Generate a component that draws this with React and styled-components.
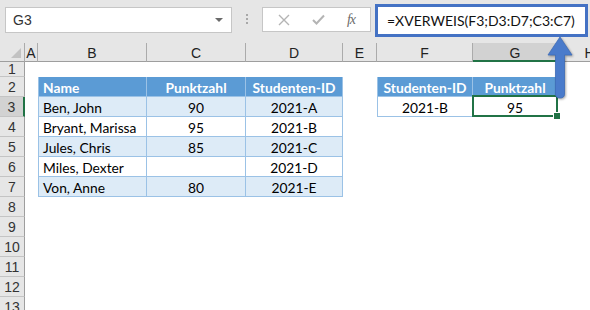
import React from 'react'
import styled, { createGlobalStyle } from 'styled-components'

const GlobalStyle = createGlobalStyle`
  body {
    margin: 0;
    background: #ffffff;
    overflow: hidden;
  }
`

const Window = styled.div`
  position: relative;
  width: 590px;
  height: 310px;
  overflow: hidden;
  font-family: 'Lato', 'Liberation Sans', sans-serif;
`

const FormulaBar = styled.div`
  height: 43px;
  background: #e6e6e6;
  display: flex;
  align-items: flex-start;
  box-sizing: border-box;
`

const NameBox = styled.div`
  margin: 7px 0 0 5px;
  width: 227px;
  height: 26px;
  box-sizing: border-box;
  background: #fff;
  border: 1px solid #c6c6c6;
  display: flex;
  align-items: center;
  justify-content: space-between;
  padding: 0 8px 0 7px;
  font-family: 'Liberation Sans', sans-serif;
  font-size: 14px;
  color: #333;
`

const Caret = styled.span`
  width: 0;
  height: 0;
  border-left: 4px solid transparent;
  border-right: 4px solid transparent;
  border-top: 4px solid #6a6a6a;
`

const Dots = styled.div`
  margin: 14px 0 0 0;
  width: 30px;
  display: flex;
  flex-direction: column;
  align-items: center;
  gap: 2px;
  & span {
    width: 2px;
    height: 2px;
    background: #a8a8a8;
  }
`

const Buttons = styled.div`
  margin-top: 7px;
  width: 109px;
  height: 25px;
  box-sizing: border-box;
  background: #fff;
  border: 1px solid #c6c6c6;
  display: flex;
  align-items: center;
  justify-content: space-around;
  padding: 0 4px;
`

const Fx = styled.span`
  font-family: 'Liberation Serif', serif;
  font-style: italic;
  font-size: 14px;
  color: #6b6b6b;
  letter-spacing: -1px;
`

const FormulaInput = styled.div`
  margin: 4px 0 0 4px;
  width: 213px;
  height: 33px;
  box-sizing: border-box;
  border: 3px solid #4472c4;
  background: #fff;
  display: flex;
  align-items: center;
  padding-left: 9px;
  font-family: 'Lato', sans-serif;
  font-size: 14px;
  white-space: nowrap;
  color: #111;
`

const Sheet = styled.div`
  display: grid;
  grid-template-columns: 25px 13px 109px 99px 97px 34px 96px 85px 64px;
  grid-template-rows: 19px 15px repeat(12, 20px);
`

const ColHead = styled.div`
  box-sizing: border-box;
  background: ${p => (p.$active ? '#d2d2d2' : '#e6e6e6')};
  border-right: 1px solid #ababab;
  border-bottom: ${p => (p.$active ? '2px solid #217346' : '1px solid #9e9e9e')};
  display: flex;
  align-items: center;
  justify-content: center;
  font-family: 'Liberation Sans', sans-serif;
  font-size: 14px;
  color: #222;
  padding-top: 2px;
`

const Corner = styled(ColHead)`
  position: relative;
  &::after {
    content: '';
    position: absolute;
    right: 3px;
    bottom: 3px;
    width: 0;
    height: 0;
    border-left: 10px solid transparent;
    border-bottom: 10px solid #c2c2c2;
  }
`

const RowHead = styled.div`
  box-sizing: border-box;
  background: ${p => (p.$active ? '#d2d2d2' : '#e6e6e6')};
  border-right: ${p => (p.$active ? '2px solid #217346' : '1px solid #9e9e9e')};
  border-bottom: 1px solid #c4c4c4;
  display: flex;
  align-items: center;
  justify-content: center;
  font-family: 'Liberation Sans', sans-serif;
  font-size: 14px;
  color: #333;
`

const Cell = styled.div`
  position: relative;
  box-sizing: border-box;
  display: flex;
  align-items: center;
  justify-content: ${p => (p.$align === 'left' ? 'flex-start' : 'center')};
  padding: 1px 4px 0;
  font-size: 13.8px;
  white-space: nowrap;
  color: ${p => (p.$kind === 'head' ? '#fff' : '#000')};
  font-weight: ${p => (p.$kind === 'head' ? 700 : 400)};
  background: ${p =>
    p.$kind === 'head' ? '#5b9bd5' : p.$kind === 'band' ? '#ddebf7' : '#fff'};
  border-right: ${p => (p.$kind ? '1px solid #9bc2e6' : 'none')};
  border-bottom: ${p => (p.$kind ? '1px solid #9bc2e6' : 'none')};
  border-left: ${p => (p.$first ? '1px solid #9bc2e6' : 'none')};

  ${p =>
    p.$selected &&
    `
    &::after {
      content: '';
      position: absolute;
      left: -1px;
      top: -2px;
      right: -1px;
      bottom: -1px;
      border: 2px solid #217346;
    }
    &::before {
      content: '';
      position: absolute;
      right: -4px;
      bottom: -4px;
      width: 6px;
      height: 6px;
      background: #217346;
      border: 1px solid #fff;
      z-index: 2;
    }
  `}
`

const Arrow = styled.svg`
  position: absolute;
  left: 545px;
  top: 36px;
  filter: drop-shadow(1px 1px 1px rgba(0, 0, 0, 0.35));
`

const COLS = ['A', 'B', 'C', 'D', 'E', 'F', 'G', 'H']

const students = [
  ['Ben, John', '90', '2021-A'],
  ['Bryant, Marissa', '95', '2021-B'],
  ['Jules, Chris', '85', '2021-C'],
  ['Miles, Dexter', '', '2021-D'],
  ['Von, Anne', '80', '2021-E'],
]

const buildCells = () => {
  const cells = {}
  cells.B2 = { text: 'Name', kind: 'head', align: 'left', first: true }
  cells.C2 = { text: 'Punktzahl', kind: 'head' }
  cells.D2 = { text: 'Studenten-ID', kind: 'head' }
  students.forEach((s, i) => {
    const r = i + 3
    const kind = i % 2 === 0 ? 'band' : 'plain'
    cells['B' + r] = { text: s[0], kind, align: 'left', first: true }
    cells['C' + r] = { text: s[1], kind }
    cells['D' + r] = { text: s[2], kind }
  })
  cells.F2 = { text: 'Studenten-ID', kind: 'head', first: true }
  cells.G2 = { text: 'Punktzahl', kind: 'head' }
  cells.F3 = { text: '2021-B', kind: 'plain', first: true }
  cells.G3 = { text: '95', kind: 'plain', selected: true }
  return cells
}

const App = () => {
  const cells = buildCells()
  const rows = []
  for (let r = 1; r <= 13; r++) {
    rows.push(
      <RowHead key={'r' + r} $active={r === 3}>
        {r}
      </RowHead>
    )
    COLS.forEach(c => {
      const cell = cells[c + r]
      rows.push(
        <Cell
          key={c + r}
          $kind={cell?.kind}
          $align={cell?.align}
          $first={cell?.first}
          $selected={cell?.selected}
        >
          {cell?.text}
        </Cell>
      )
    })
  }

  return (
    <Window>
      <GlobalStyle />
      <FormulaBar>
        <NameBox>
          G3
          <Caret />
        </NameBox>
        <Dots>
          <span />
          <span />
          <span />
        </Dots>
        <Buttons>
          <svg width="12" height="12" viewBox="0 0 12 12">
            <path d="M1 1 L11 11 M11 1 L1 11" stroke="#b4b4b4" strokeWidth="1.4" />
          </svg>
          <svg width="13" height="11" viewBox="0 0 13 11">
            <path d="M1 6 L4.5 9.5 L12 1.5" stroke="#b4b4b4" strokeWidth="2" fill="none" />
          </svg>
          <Fx>fx</Fx>
        </Buttons>
        <FormulaInput>=XVERWEIS(F3;D3:D7;C3:C7)</FormulaInput>
      </FormulaBar>
      <Sheet>
        <Corner />
        {COLS.map(c => (
          <ColHead key={c} $active={c === 'G'}>
            {c}
          </ColHead>
        ))}
        {rows}
      </Sheet>
      <Arrow width="30" height="66" viewBox="0 0 30 66">
        <path
          d="M3 19 L15 1 L27 19 L19.5 19 L19.5 58 Q19.5 62 15 62 Q10.5 62 10.5 58 L10.5 19 Z"
          fill="#4a7bcb"
          stroke="#3e6cb8"
          strokeWidth="0.8"
        />
      </Arrow>
    </Window>
  )
}

export default App
